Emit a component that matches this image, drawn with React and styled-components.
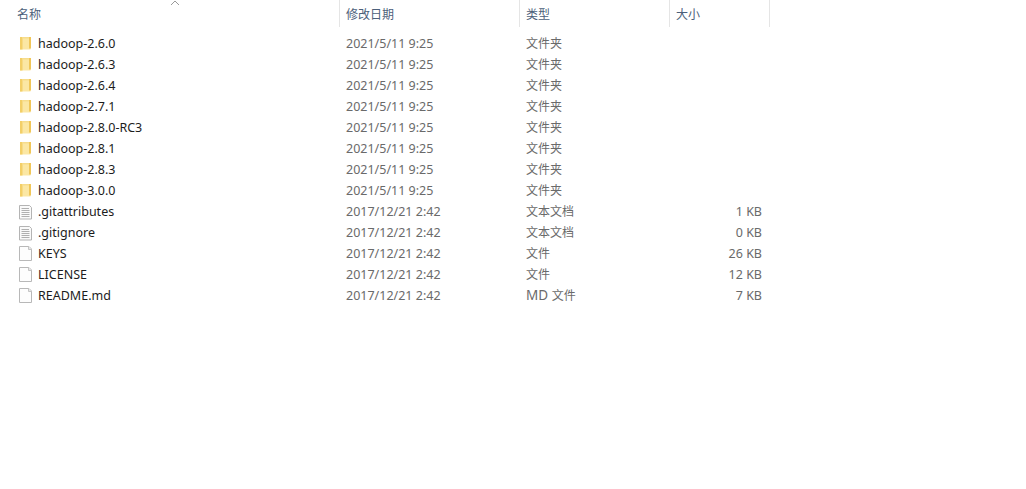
import React from "react";
import styled, { createGlobalStyle } from "styled-components";

const Global = createGlobalStyle`
  html, body { margin: 0; padding: 0; background: #fff; }
  body { font-family: "Noto Sans", "Noto Sans CJK SC", sans-serif; font-size: 12.5px; }
`;

const COLS = "340px 180px 150px 100px";

const Page = styled.div`
  width: 1026px;
  height: 489px;
  overflow: hidden;
  background: #fff;
`;

const Header = styled.div`
  position: relative;
  display: grid;
  grid-template-columns: ${COLS};
  width: 770px;
  height: 27px;
`;

const HeaderCell = styled.div`
  display: flex;
  align-items: center;
  height: 27px;
  padding: 0 0 1px ${(p) => p.$pad}px;
  box-sizing: border-box;
  border-right: 1px solid #e5e5e5;
  color: #4c607a;
  font-family: "Noto Sans CJK SC", sans-serif;
  font-size: 12px;
`;

const SortArrow = styled.svg`
  position: absolute;
  left: 170px;
  top: 0;
`;

const List = styled.div`
  padding-top: 6px;
  width: 770px;
`;

const Row = styled.div`
  display: grid;
  grid-template-columns: ${COLS};
  height: 21px;
  align-items: center;
`;

const NameCell = styled.div`
  display: flex;
  align-items: center;
  padding-left: 19px;
  color: #1c1c1c;
`;

const IconSlot = styled.span`
  display: flex;
  width: 19px;
  height: 16px;
  flex: none;
`;

const DateCell = styled.div`
  padding-left: 6px;
  color: #6a6a6a;
`;

const TypeCell = styled.div`
  padding: 0 0 2px 6px;
  color: #6a6a6a;
  font-size: 12px;
`;

const TypeLatin = styled.span`
  font-size: 13.5px;
`;

const SizeCell = styled.div`
  padding-right: 8px;
  text-align: right;
  color: #6a6a6a;
`;

const FolderIcon = () => (
  <svg width="14" height="16" viewBox="0 0 14 16">
    <path d="M1 1h10.5v12.5H1z" fill="#fbe7a4" />
    <path d="M1 1h2.5v12.5H1z" fill="#f3cf68" />
    <path d="M10 1h2v11.5h-2z" fill="#f0c658" />
    <path d="M3.5 1h6.5v1.5H3.5z" fill="#f6dc8c" />
  </svg>
);

const TextIcon = () => (
  <svg width="14" height="16" viewBox="0 0 14 16">
    <path d="M.5 1.5h10l2 2v11.5H.5z" fill="#fafafa" stroke="#b4b4b4" />
    <path d="M2.5 4.5h7.5M2.5 6.5h8M2.5 8.5h8M2.5 10.5h8M2.5 12.5h8" stroke="#b0b0b0" strokeWidth="1" />
  </svg>
);

const FileIcon = () => (
  <svg width="14" height="16" viewBox="0 0 14 16">
    <path d="M.5 .5h9.5l2.5 2.5v11.5H.5z" fill="#fdfdfd" stroke="#b8b8b8" />
    <path d="M9.5 .5v3h3" fill="#e8e8e8" stroke="#c4c4c4" />
  </svg>
);

const icons = { folder: FolderIcon, text: TextIcon, file: FileIcon };

const D1 = "2021/5/11 9:25";
const D2 = "2017/12/21 2:42";

const rows = [
  ["folder", "hadoop-2.6.0", D1, "文件夹", ""],
  ["folder", "hadoop-2.6.3", D1, "文件夹", ""],
  ["folder", "hadoop-2.6.4", D1, "文件夹", ""],
  ["folder", "hadoop-2.7.1", D1, "文件夹", ""],
  ["folder", "hadoop-2.8.0-RC3", D1, "文件夹", ""],
  ["folder", "hadoop-2.8.1", D1, "文件夹", ""],
  ["folder", "hadoop-2.8.3", D1, "文件夹", ""],
  ["folder", "hadoop-3.0.0", D1, "文件夹", ""],
  ["text", ".gitattributes", D2, "文本文档", "1 KB"],
  ["text", ".gitignore", D2, "文本文档", "0 KB"],
  ["file", "KEYS", D2, "文件", "26 KB"],
  ["file", "LICENSE", D2, "文件", "12 KB"],
  ["file", "README.md", D2, <><TypeLatin>MD </TypeLatin>文件</>, "7 KB"],
];

export default function App() {
  return (
    <Page>
      <Global />
      <Header>
        <HeaderCell $pad={17}>名称</HeaderCell>
        <HeaderCell $pad={6}>修改日期</HeaderCell>
        <HeaderCell $pad={6}>类型</HeaderCell>
        <HeaderCell $pad={6}>大小</HeaderCell>
        <SortArrow width="10" height="6" viewBox="0 0 10 6">
          <path d="M1 5l4 -4l4 4" fill="none" stroke="#9a9a9a" strokeWidth="1" />
        </SortArrow>
      </Header>
      <List>
        {rows.map(([kind, name, date, type, size]) => {
          const Icon = icons[kind];
          return (
            <Row key={name}>
              <NameCell>
                <IconSlot>
                  <Icon />
                </IconSlot>
                {name}
              </NameCell>
              <DateCell>{date}</DateCell>
              <TypeCell>{type}</TypeCell>
              <SizeCell>{size}</SizeCell>
            </Row>
          );
        })}
      </List>
    </Page>
  );
}
